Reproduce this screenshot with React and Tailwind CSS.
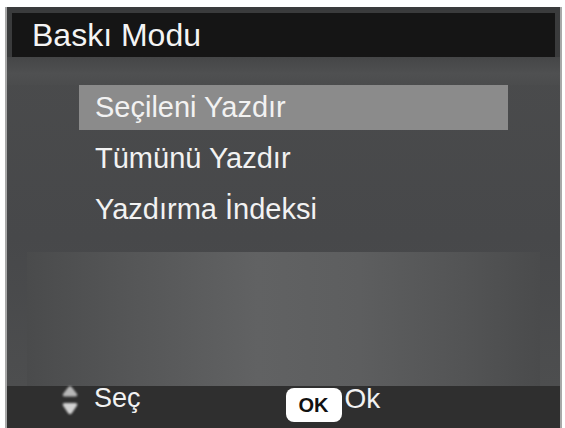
import React from 'react'

const items = ['Seçileni Yazdır', 'Tümünü Yazdır', 'Yazdırma İndeksi']

function UpDown() {
  return (
    <svg width="20" height="34" viewBox="0 0 20 34" className="blur-[0.8px]">
      <path d="M10 2 Q11 2 12 3.5 L17 10 Q18 12.5 15 12.5 L5 12.5 Q2 12.5 3 10 L8 3.5 Q9 2 10 2 Z" fill="#b8b8b8" />
      <path d="M5 19 L15 19 Q18 19 17 21.5 L12 29 Q10 31.5 8 29 L3 21.5 Q2 19 5 19 Z" fill="#d2d2d2" />
    </svg>
  )
}

export default function App() {
  return (
    <div
      className="h-[428px] w-[565px] overflow-hidden bg-white pl-[5px] pr-[3px] pt-[7px]"
      style={{ fontFamily: '"Liberation Sans", Arial, sans-serif' }}
    >
      <div className="flex h-full flex-col border-l-2 border-r-2 border-[#a8a8a8] bg-[#3a3b3c]">
        {/* Title bar */}
        <div className="px-[5px] pt-[6px]">
          <div className="flex h-[44px] items-center bg-[#151515] pl-[20px] text-[32px] leading-none text-[#f4f4f4]">
            Baskı Modu
          </div>
        </div>

        {/* Menu body */}
        <div className="flex flex-1 flex-col bg-[linear-gradient(to_bottom,#4a4b4c,#47484a_55%,#4d4e4f)]">
          <div className="h-[28px] bg-[linear-gradient(to_bottom,#454647,#4f5051_60%,#4b4c4d)]" />
          <div className="flex flex-col gap-[6px] pl-[72px] pr-[52px]">
            {items.map((t, i) => (
              <div
                key={t}
                className={`flex h-[45px] items-center pl-[16px] text-[29px] leading-none text-[#f2f2f2] ${
                  i === 0 ? 'bg-[#8b8b8b]' : ''
                }`}
              >
                {t}
              </div>
            ))}
          </div>
          <div className="mx-[20px] mt-[20px] flex-1 bg-[linear-gradient(to_right,#4a4b4c,#555657_20%,#616263_45%,#5d5e5f_65%,#535455_85%,#4a4b4c)]" />
        </div>

        {/* Footer */}
        <div className="flex h-[42px] items-start bg-[#2f2f2f] text-[27px] leading-none text-[#f2f2f2]">
          <div className="ml-[53px] mt-[-2px]">
            <UpDown />
          </div>
          <span className="ml-[14px] mt-[-1px]">Seç</span>
          <div className="ml-[145px] mt-[2px] flex h-[34px] w-[56px] items-center justify-center rounded-[8px] bg-white text-[20px] font-bold text-[#111]">
            OK
          </div>
          <span className="ml-[3px] mt-[-1px] text-[28px]">Ok</span>
        </div>
      </div>
    </div>
  )
}
